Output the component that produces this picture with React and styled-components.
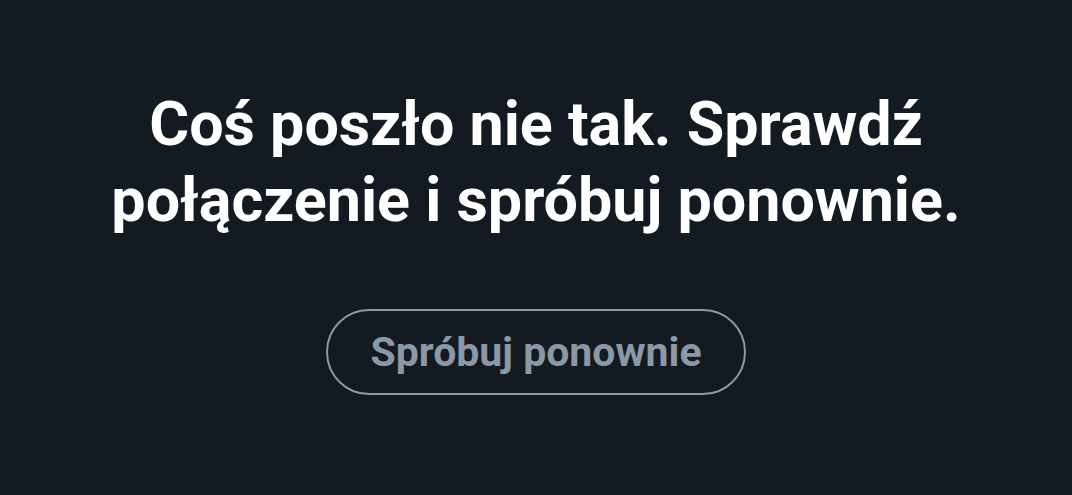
import React from 'react'
import styled, { createGlobalStyle } from 'styled-components'

const Global = createGlobalStyle`
  html, body {
    margin: 0;
    padding: 0;
    background: #141a22;
  }
`

const Page = styled.div`
  min-height: 100vh;
  box-sizing: border-box;
  display: flex;
  flex-direction: column;
  align-items: center;
  justify-content: center;
  padding-bottom: 14px;
  background: #141a22;
  font-family: Roboto, "Noto Sans", sans-serif;
`

const Message = styled.h1`
  margin: 0;
  color: #ffffff;
  font-size: 61px;
  font-weight: 700;
  line-height: 76px;
  text-align: center;
  max-width: 960px;
`

const RetryButton = styled.button`
  margin-top: 71px;
  height: 86px;
  padding: 0 42px;
  border: 2px solid #8b98a5;
  border-radius: 43px;
  background: transparent;
  color: #8b98a5;
  font-family: Roboto, "Noto Sans", sans-serif;
  font-size: 41px;
  font-weight: 700;
  cursor: pointer;
`

export default function App() {
  return (
    <>
      <Global />
      <Page>
        <Message>
          Coś poszło nie tak. Sprawdź
          <br />
          połączenie i spróbuj ponownie.
        </Message>
        <RetryButton>Spróbuj ponownie</RetryButton>
      </Page>
    </>
  )
}
